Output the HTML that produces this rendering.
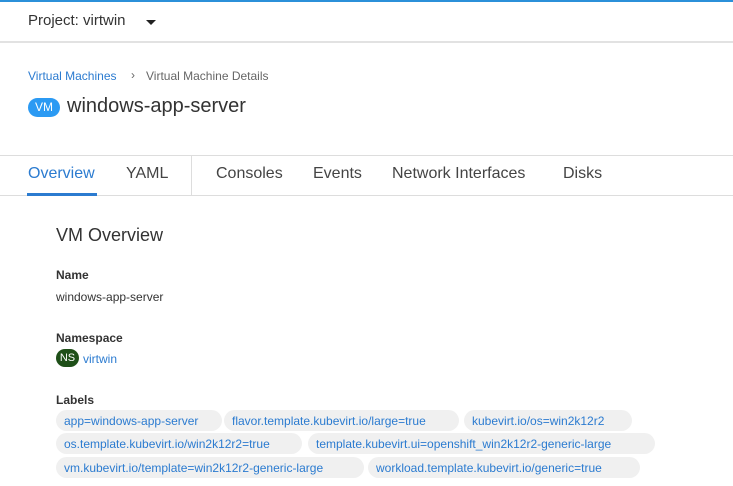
<!DOCTYPE html>
<html><head><style>
body{margin:0;width:733px;height:486px;overflow:hidden;background:#fff;font-family:"Liberation Sans",sans-serif;color:#333;position:relative}
.a{position:absolute;white-space:nowrap}
.chip{position:absolute;height:21px;line-height:22px;background:#f0f0f0;border-radius:11px;color:#2b7bd0;font-size:12px;padding:0 8px;box-sizing:border-box}
</style></head><body>
<div class="a" style="left:0;top:0;width:733px;height:2px;background:#2b90d9"></div>
<div class="a" style="left:0;top:41px;width:733px;height:2px;background:#e2e2e2"></div>
<div class="a" style="left:28px;top:12px;font-size:15px;color:#333">Project: virtwin</div>
<div class="a" style="left:146px;top:20px;width:0;height:0;border-left:5px solid transparent;border-right:5px solid transparent;border-top:5px solid #222"></div>
<div class="a" style="left:28px;top:69px;font-size:12px;color:#2b7bd0">Virtual Machines</div>
<div class="a" style="left:131px;top:68px;font-size:12px;color:#666">›</div>
<div class="a" style="left:146px;top:69px;font-size:12px;color:#666">Virtual Machine Details</div>
<div class="a" style="left:28px;top:98px;width:32px;height:19px;border-radius:10px;background:#2b9af3;color:#fff;font-size:12px;line-height:19px;text-align:center">VM</div>
<div class="a" style="left:67px;top:95px;font-size:20px;color:#333">windows-app-server</div>
<div class="a" style="left:0;top:155px;width:733px;height:1px;background:#ddd"></div>
<div class="a" style="left:0;top:195px;width:733px;height:1px;background:#ddd"></div>
<div class="a" style="left:191px;top:156px;width:1px;height:39px;background:#ddd"></div>
<div class="a" style="left:28px;top:165px;font-size:16px;color:#2b7bd0">Overview</div>
<div class="a" style="left:27px;top:193px;width:70px;height:3px;background:#2b7bd0"></div>
<div class="a" style="left:126px;top:165px;font-size:16px;color:#444">YAML</div>
<div class="a" style="left:216px;top:165px;font-size:16px;color:#444">Consoles</div>
<div class="a" style="left:313px;top:165px;font-size:16px;color:#444">Events</div>
<div class="a" style="left:392px;top:165px;font-size:16px;color:#444">Network Interfaces</div>
<div class="a" style="left:563px;top:165px;font-size:16px;color:#444">Disks</div>
<div class="a" style="left:56px;top:225px;font-size:18px;color:#333">VM Overview</div>
<div class="a" style="left:56px;top:268px;font-size:12px;font-weight:bold;color:#333">Name</div>
<div class="a" style="left:56px;top:290px;font-size:12px;color:#333">windows-app-server</div>
<div class="a" style="left:56px;top:331px;font-size:12px;font-weight:bold;color:#333">Namespace</div>
<div class="a" style="left:56px;top:349px;width:23px;height:18px;border-radius:9px;background:#1e4f18;color:#fff;font-size:11px;line-height:18px;text-align:center">NS</div>
<div class="a" style="left:83px;top:352px;font-size:12px;color:#2b7bd0">virtwin</div>
<div class="a" style="left:56px;top:393px;font-size:12px;font-weight:bold;color:#333">Labels</div>
<div class="chip" style="left:56px;top:410px;width:166px">app=windows-app-server</div>
<div class="chip" style="left:224px;top:410px;width:235px">flavor.template.kubevirt.io/large=true</div>
<div class="chip" style="left:464px;top:410px;width:168px">kubevirt.io/os=win2k12r2</div>
<div class="chip" style="left:56px;top:433px;width:246px">os.template.kubevirt.io/win2k12r2=true</div>
<div class="chip" style="left:308px;top:433px;width:347px">template.kubevirt.ui=openshift_win2k12r2-generic-large</div>
<div class="chip" style="left:56px;top:457px;width:308px">vm.kubevirt.io/template=win2k12r2-generic-large</div>
<div class="chip" style="left:368px;top:457px;width:272px">workload.template.kubevirt.io/generic=true</div>
</body></html>
